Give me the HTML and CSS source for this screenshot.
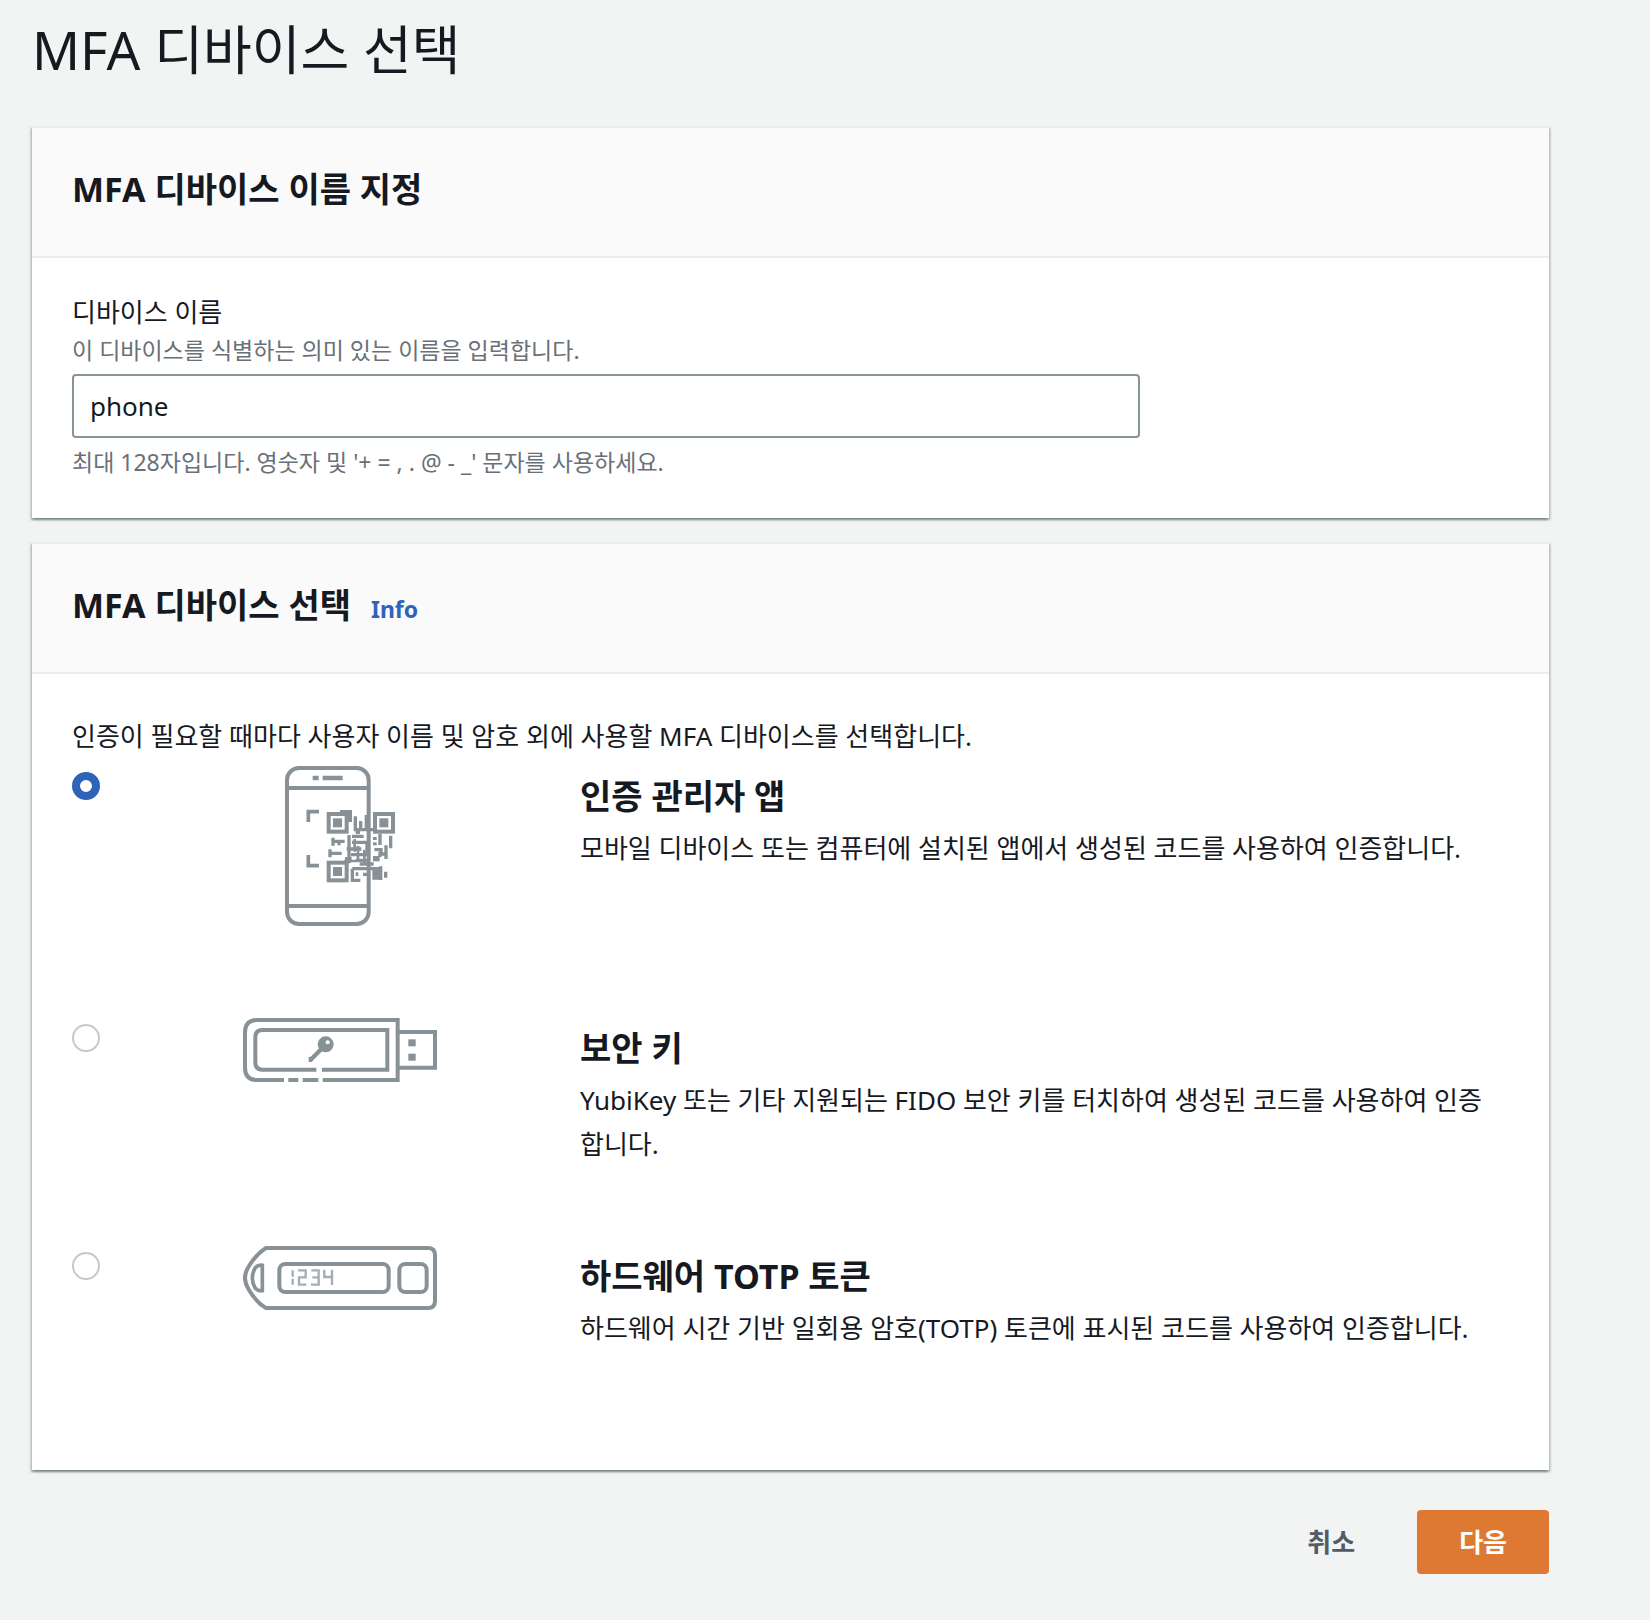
FILE: index.html
```
<!DOCTYPE html>
<html lang="ko">

<head>
    <meta charset="UTF-8">
    <meta name="viewport" content="width=device-width, initial-scale=1">
    <title>MFA 디바이스 선택</title>

    <link rel="stylesheet" href="styles.css">
</head>

<body>
    <form id="main">
        <h1>MFA 디바이스 선택</h1>

        <section class="panel">
            <div class="panel-header">
                <h2>MFA 디바이스 이름 지정</h2>
            </div>
            <div class="panel-body">
                <label class="field-label" for="device-name">디바이스 이름</label>
                <div class="field-hint" id="name-hint">이 디바이스를 식별하는 의미 있는 이름을 입력합니다.</div>
                <input class="field-input" type="text" id="device-name" value="phone" aria-describedby="name-hint name-rule">
                <div class="field-hint" id="name-rule">최대 128자입니다. 영숫자 및 '+ = , . @ - _' 문자를 사용하세요.</div>
            </div>
        </section>

        <section class="panel">
            <div class="panel-header">
                <h2>MFA 디바이스 선택</h2>
                <a class="info" href="#">Info</a>
            </div>
            <div class="panel-body devices">
                <p>인증이 필요할 때마다 사용자 이름 및 암호 외에 사용할 MFA 디바이스를 선택합니다.</p>

                <label class="device">
                    <input type="radio" name="device" value="app" checked>
                    <!-- phone with QR code -->
                    <svg class="device-icon phone" viewBox="46 33 330 480" fill="none" stroke="#879196">
                        <rect x="52" y="39" width="245" height="468" rx="36" stroke-width="12" />
                        <path d="M51 99H297M51 453H297" stroke-width="12" />
                        <path d="M129 69H147M159 69H219" stroke-width="13" />
                        <path d="M148 170H116V201M116 300V332H148" stroke-width="11" />
                        <g stroke-width="12">
                            <rect x="177" y="177" width="54" height="53" />
                            <rect x="316" y="177" width="54" height="53" />
                            <rect x="177" y="323" width="54" height="53" />
                        </g>
                        <g fill="#879196" stroke="none">
                            <rect x="190" y="190" width="27" height="27" />
                            <rect x="329" y="190" width="27" height="27" />
                            <rect x="190" y="336" width="27" height="27" />
                            <path d="M211 165H247V201H231V177H211Z" />
                            <rect x="310" y="246" width="11" height="9" />
                            <rect x="310" y="262" width="11" height="9" />
                            <rect x="310" y="303" width="20" height="16" />
                        </g>
                        <g stroke-width="10">
                            <path d="M257 184V224H312M273 198V224M290 180V224" />
                            <path d="M190 248V272M190 259H225M208 259V271M181 283V307M181 295H216" />
                            <path d="M238 240V325M247 244H282M258 232H271M247 262H292V304M231 282H275M244 299H292" />
                            <path d="M226 311H246M258 316H297M270 327H312M248 341V376H272" />
                            <path d="M248 341H323V374M280 358H300M313 345V374M333 334V375M348 350V368" />
                            <path d="M331 236V270M363 242V280M349 271V312M314 284H334V297H349M331 291V306" />
                        </g>
                        <g stroke-width="8">
                            <path d="M255 252V290M265 272V322M284 284V325M224 318H262M262 352V363" />
                        </g>
                    </svg>
                    <span class="device-text">
                        <span class="device-title">인증 관리자 앱</span>
                        <span class="device-desc">모바일 디바이스 또는 컴퓨터에 설치된 앱에서 생성된 코드를 사용하여 인증합니다.</span>
                    </span>
                </label>

                <label class="device">
                    <input type="radio" name="device" value="key">
                    <!-- usb key -->
                    <svg class="device-icon" viewBox="39 39 582 192" fill="none" stroke="#879196" stroke-width="12">
                        <path d="M162 225H82Q45 225 45 188V82Q45 45 82 45H503V225H278M265 225H218M205 225H175" />
                        <path d="M259 194H98Q76 194 76 172V97Q76 75 98 75H472V194H276" />
                        <path d="M503 81H615V188H503" />
                        <path d="M280 126L242 164" stroke-width="13" />
                        <g fill="#879196" stroke="none">
                            <circle cx="287" cy="118" r="24" />
                            <path d="M236 155L253 160L245 171H236Z" />
                            <rect x="535" y="103" width="22" height="21" />
                            <rect x="535" y="146" width="22" height="21" />
                        </g>
                        <circle cx="293" cy="112" r="6" fill="#fff" stroke="none" />
                    </svg>
                    <span class="device-text">
                        <span class="device-title">보안 키</span>
                        <span class="device-desc">YubiKey 또는 기타 지원되는 FIDO 보안 키를 터치하여 생성된 코드를 사용하여 인증합니다.</span>
                    </span>
                </label>

                <label class="device">
                    <input type="radio" name="device" value="totp">
                    <!-- token with a small display -->
                    <svg class="device-icon" viewBox="39 33 582 192" fill="none" stroke="#879196" stroke-width="12">
                        <path d="M108 39H594Q615 39 615 60V198Q615 219 594 219H108Q80 203 57 165Q33 129 57 93Q80 56 108 39Z" />
                        <path d="M97 91V167Q84 169 76 160Q58 129 76 98Q84 89 97 91Z" stroke-width="11" />
                        <rect x="148" y="87" width="328" height="84" rx="18" />
                        <rect x="508" y="87" width="82" height="84" rx="18" />
                        <g stroke="#a5adb1" stroke-width="7">
                            <path d="M188 106V125M188 131V149" />
                            <path d="M204 106H227V127H207V149H229" />
                            <path d="M244 106H266V149H243M247 127H266" />
                            <path d="M283 104V126H306M306 104V150" />
                        </g>
                    </svg>
                    <span class="device-text">
                        <span class="device-title">하드웨어 TOTP 토큰</span>
                        <span class="device-desc">하드웨어 시간 기반 일회용 암호(TOTP) 토큰에 표시된 코드를 사용하여 인증합니다.</span>
                    </span>
                </label>
            </div>
        </section>

        <div class="actions">
            <button type="button" class="btn">취소</button>
            <button type="submit" class="btn btn-primary">다음</button>
        </div>
    </form>
</body>

</html>
```
FILE: styles.css
```
* {
    box-sizing: border-box;
}

body {
    margin: 0;
    background: #f2f4f3;
    color: #16191f;
    font-family: "Noto Sans", "Noto Sans CJK KR", sans-serif;
    font-size: 26px;
    line-height: 44px;
}

#main {
    padding: 16px 101px 40px 32px;
}

h1,
h2,
p {
    margin: 0;
}

h1 {
    font-size: 53px;
    font-weight: 400;
    line-height: 68px;
    margin-bottom: 42px;
}

h2 {
    font-size: 34px;
    line-height: 44px;
}

.panel {
    background: #fff;
    border-top: 2px solid #eaeded;
    box-shadow: 0 2px 2px 0 rgba(0, 28, 36, 0.3), 2px 2px 2px 0 rgba(0, 28, 36, 0.15), -2px 2px 2px 0 rgba(0, 28, 36, 0.15);
    margin-bottom: 24px;
}

.panel-header {
    display: flex;
    align-items: baseline;
    gap: 20px;
    padding: 39px 40px 45px;
    background: #fafafa;
    border-bottom: 2px solid #eaeded;
}

.panel-body {
    padding: 32px 40px 40px;
}

.info {
    color: #2e63b8;
    font-size: 23px;
    font-weight: 700;
    line-height: 32px;
    text-decoration: none;
}

.field-label {
    display: block;
}

.field-hint {
    color: #687078;
    font-size: 23px;
    line-height: 32px;
}

.field-input {
    display: block;
    width: 100%;
    max-width: 1068px;
    height: 64px;
    margin: 8px 0;
    padding: 0 16px;
    border: 2px solid #879596;
    border-radius: 4px;
    background: #fff;
    color: #16191f;
    font: inherit;
}

.devices p {
    margin: 8px 0;
}

.device {
    display: grid;
    grid-template-columns: 28px 400px 1fr;
    gap: 40px;
    align-items: start;
    padding-bottom: 80px;
}

.device input {
    appearance: none;
    width: 28px;
    height: 28px;
    margin: 6px 0 0;
    border: 2px solid #c8c8c8;
    border-radius: 50%;
    background: #fff;
}

.device input:checked {
    border: 8px solid #2e63b8;
}

.device-icon {
    justify-self: center;
    width: 194px;
    height: 64px;
}

.phone {
    width: 110px;
    height: 160px;
    margin-bottom: 12px;
}

.device-text {
    padding: 8px 16px 0 0;
}

.device-title,
.device-desc {
    display: block;
}

.device-title {
    font-size: 34px;
    font-weight: 700;
    margin-bottom: 8px;
}

.actions {
    display: flex;
    justify-content: flex-end;
    gap: 20px;
    padding-top: 16px;
}

.btn {
    height: 64px;
    padding: 0 40px;
    border: 2px solid transparent;
    border-radius: 4px;
    background: transparent;
    color: #545b64;
    font: inherit;
    font-weight: 700;
}

.btn-primary {
    background: #dd7933;
    color: #fff;
}
```
